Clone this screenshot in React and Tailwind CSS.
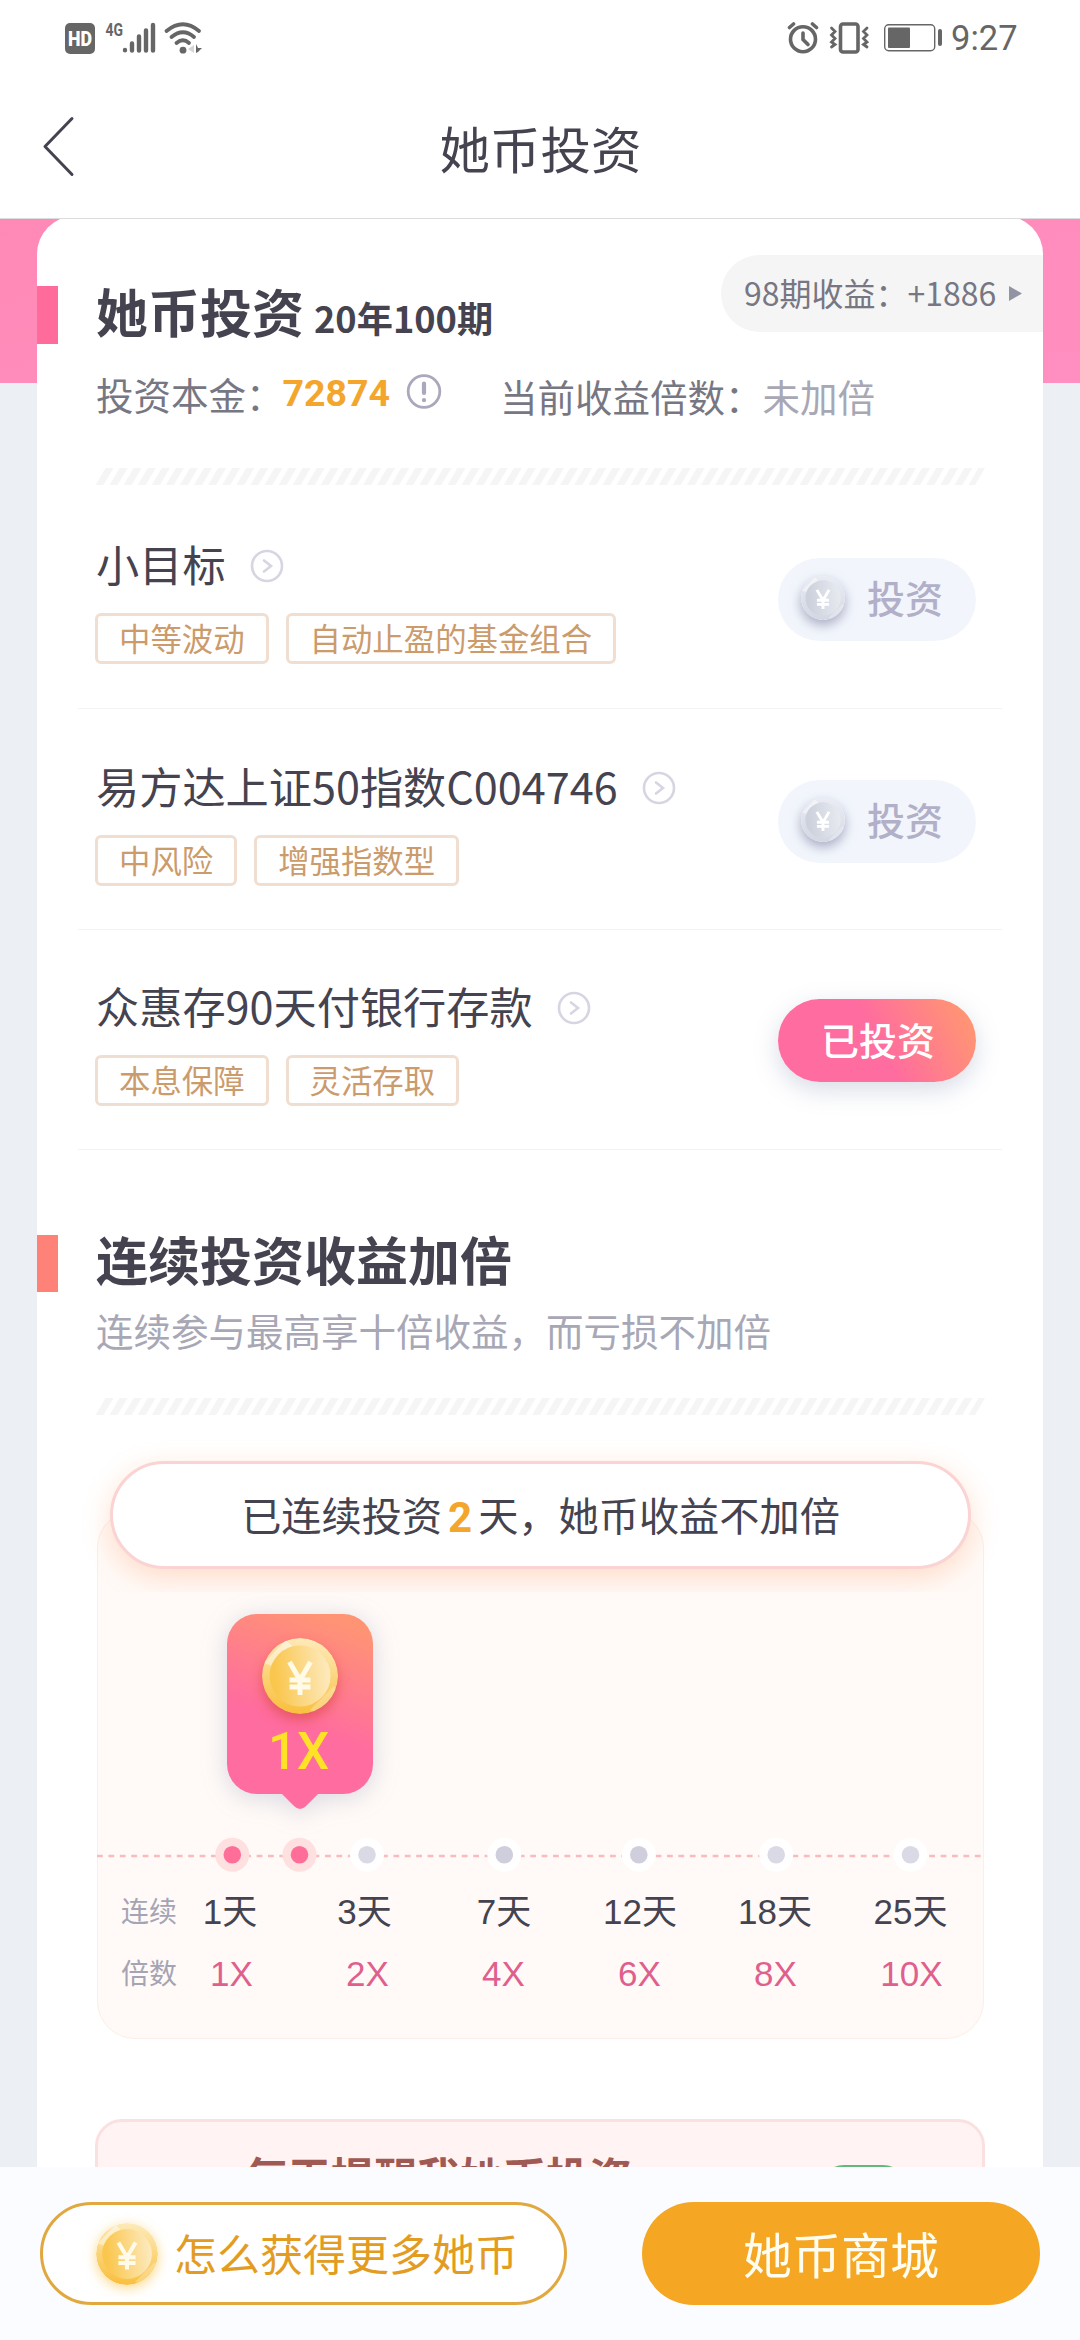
import React from "react";

const CJK = "font-['Noto_Sans_CJK_SC',sans-serif]";

function StatusBar() {
  return (
    <div className="flex h-[76px] shrink-0 items-start text-[#666] pt-[10px]">
      <svg className="ml-[65px]" width="140" height="48" viewBox="65 10 140 48" fill="#666">
        <rect x="65" y="23" width="30" height="31" rx="5" />
        <text x="80" y="45.500" textAnchor="middle" textLength="24" lengthAdjust="spacingAndGlyphs" fontFamily="Roboto, sans-serif" fontWeight="900" fontSize="20" fill="#fff">HD</text>
        <text x="105.500" y="36" textLength="17.500" lengthAdjust="spacingAndGlyphs" fontFamily="Roboto, sans-serif" fontWeight="700" fontSize="19">4G</text>
        <g stroke="#666" strokeWidth="4.400" strokeLinecap="round">
          <path d="M125 50v.3M132 43.500v7M139 36.500v14M146 30.500v20M153 25v25.500" />
        </g>
        <g fill="none" stroke="#666" strokeWidth="3.800" strokeLinecap="round">
          <path d="M166.500 31Q183 17.500 199 31" />
          <path d="M171.500 37Q183 27.500 194 37" />
          <path d="M176.500 43Q183 37.500 189 43" />
        </g>
        <circle cx="183" cy="50.200" r="3.400" />
        <path d="M194 45v8l-6-4z" fill="#d5d5d5" />
        <path d="M196 44l2 4h4l-4 4l-2 1z" />
      </svg>
      <svg className="ml-[581px] mt-[12px]" width="158" height="32" viewBox="785 22 158 32" fill="none" stroke="#666" strokeWidth="3.600" strokeLinecap="round">
        <circle cx="802" cy="39.200" r="12.500" />
        <path d="M802 33v6.500l5 5" />
        <path d="M788.500 27.500l4-3.500M815.500 27.500l-4-3.500" />
        <rect x="839.500" y="24" width="17.500" height="28" rx="2.500" />
        <path d="M830.500 28l3.500 3.500l-3.500 3.500l3.500 3.500l-3.500 3.500l3.500 2.500l-3.500 2.500M866 28l-3.500 3.500l3.500 3.500l-3.500 3.500l3.500 3.500l-3.500 2.500l3.500 2.500" strokeWidth="2.800" />
        <rect x="883.700" y="24.700" width="50" height="26" rx="4" strokeWidth="1.400" />
        <rect x="887" y="27.500" width="22" height="20.500" rx="1" fill="#666" stroke="none" />
        <rect x="937" y="29" width="4" height="17" rx="2" fill="#666" stroke="none" />
      </svg>
      <span className="ml-[7px] mt-[12px] font-['Roboto',sans-serif] text-[34.500px] leading-[32px]">9:27</span>
    </div>
  );
}

function Header() {
  return (
    <div className="grid h-[142px] shrink-0 grid-cols-[200px_1fr_200px] items-start">
      <svg className="ml-[42px] mt-[39px]" width="34" height="64" viewBox="0 0 34 64" fill="none" stroke="#45434f" strokeWidth="3" strokeLinecap="round" strokeLinejoin="round">
        <path d="M30 3.500L3 31.500L30 59.500" />
      </svg>
      <h1 className="mt-[41px] pl-px text-center text-[50.500px] leading-[60px] text-[#45434f]">她币投资</h1>
    </div>
  );
}

function Stripes({ id }) {
  return (
    <svg className="ml-[58px] block" width="890" height="17">
      <defs>
        <pattern id={id} width="14.080" height="17" patternUnits="userSpaceOnUse">
          <path d="M0.500 17L10.500 0H18.500L8.500 17zM-13.580 17L-3.580 0H4.420L-5.580 17z" fill="#f5f5f5" />
        </pattern>
      </defs>
      <path d="M0 17L10 0H890L880 17z" fill={`url(#${id})`} />
    </svg>
  );
}

function Coin({ size, silver, id, className }) {
  const c = silver
    ? { rimA: "#e9ecf3", rimB: "#d3d7e2", inA: "#ccd1dc", inB: "#e8eaf0", y: "#ffffff" }
    : { rimA: "#fdeab8", rimB: "#f9bf3c", inA: "#fac74e", inB: "#fdeac0", y: "#fffbe8" };
  return (
    <svg className={className} width={size} height={size} viewBox="0 0 76 76">
      <defs>
        <linearGradient id={id + "r"} x1="0.500" y1="0" x2="0.400" y2="1">
          <stop offset="0" stopColor={c.rimA} />
          <stop offset="1" stopColor={c.rimB} />
        </linearGradient>
        <linearGradient id={id + "i"} x1="0" y1="0.550" x2="1" y2="0.450">
          <stop offset="0.100" stopColor={c.inA} />
          <stop offset="1" stopColor={c.inB} />
        </linearGradient>
        <clipPath id={id + "c"}><circle cx="38" cy="38" r="38" /></clipPath>
      </defs>
      <circle cx="38" cy="38" r="38" fill={`url(#${id}r)`} />
      <g clipPath={`url(#${id}c)`} fill="#fff" opacity="0.450">
        <path d="M2 25L24 2L30 8L10 28z" />
        <path d="M48 72L72 48L76 54L56 76z" opacity="0.600" />
      </g>
      <circle cx="38" cy="38" r="30.500" fill={`url(#${id}i)`} />
      <path d="M27.500 24L38 42L48.500 24M38 41V57M27.500 42H48.500M27.500 49H48.500" fill="none" stroke={c.y} strokeWidth="5" />
    </svg>
  );
}

function ArrowCircle() {
  return (
    <svg className="ml-[24px] mt-[5px]" width="34" height="34" viewBox="0 0 34 34" fill="none" stroke="#d6d5e2" strokeWidth="2.600" strokeLinecap="round">
      <circle cx="17" cy="17" r="15" />
      <path d="M14 11.500l7 5.500l-7 5.500" />
    </svg>
  );
}

const products = [
  { name: "小目标", tags: ["中等波动", "自动止盈的基金组合"], size: "h-[224px] pb-[44px]" },
  { name: "易方达上证50指数C004746", tags: ["中风险", "增强指数型"], size: "h-[221px] pb-[43px]" },
  { name: "众惠存90天付银行存款", tags: ["本息保障", "灵活存取"], done: true, size: "h-[220px] pb-[43px]" },
];

function Product({ item, index }) {
  return (
    <div className={`mx-[41px] flex items-end justify-between border-b border-[#f3f3f5] pl-[18px] ${item.size}`}>
      <div>
        <div className="flex items-center text-[43.200px] leading-[60px] text-[#45434f]">
          <span>{item.name}</span>
          <ArrowCircle />
        </div>
        <div className="-ml-px mt-[20px] flex gap-[17px]">
          {item.tags.map((t) => (
            <span key={t} className="h-[51px] rounded-[6px] border-[3px] border-[#f0dfd1] px-[21px] text-[31.400px] leading-[43px] text-[#cb9b6c]">{t}</span>
          ))}
        </div>
      </div>
      {item.done ? (
        <div className="mb-[24px] mr-[26px] h-[83px] w-[198px] rounded-full bg-[linear-gradient(63deg,#ff6c9f_50%,#ff9474_92%)] pl-[2px] text-center text-[38px] font-medium leading-[79px] text-white shadow-[0_8px_24px_rgba(120,130,170,0.280)]">已投资</div>
      ) : (
        <div className="mb-[23px] mr-[26px] flex h-[83px] w-[198px] items-center rounded-full bg-[#f2f6fc] text-[38px] font-medium text-[#b1b0c8]">
          <Coin id={"s" + index} silver size={44} className="-mt-[4px] ml-[23px] rounded-full shadow-[0_5px_12px_rgba(130,130,165,0.650)]" />
          <span className="-mt-[5px] ml-[22px] leading-[80px]">投资</span>
        </div>
      )}
    </div>
  );
}

const steps = [
  { day: "1天", x: "1X", shift: "pr-[4px]" },
  { day: "3天", x: "2X", shift: "pr-[7px]" },
  { day: "7天", x: "4X", shift: "" },
  { day: "12天", x: "6X", shift: "" },
  { day: "18天", x: "8X", shift: "pr-[2px]" },
  { day: "25天", x: "10X", shift: "pr-[3px]" },
];

const dots = [
  [135.3, "#ffe0e0", "#ff6e99"],
  [202.5, "#ffe0e0", "#ff6e99"],
  [270, "#ffffff", "#dadae6"],
  [407.3, "#ffffff", "#cfcedc"],
  [541.8, "#ffffff", "#cfcedc"],
  [679.2, "#ffffff", "#dadae6"],
  [813.5, "#ffffff", "#dadae6"],
];

function Streak() {
  return (
    <div className="relative ml-[60px] mr-[59px] mt-[95px] h-[529px] rounded-[38px] border border-[#fdeee6] bg-[#fffaf7]">
      <div className="absolute -left-[41px] -right-[41px] -top-[81px] h-[162px] overflow-hidden px-[53px] pt-[31px]">
        <div className="flex h-[108px] justify-center rounded-full border-[3px] border-[#fad3d2] bg-white text-[40.200px] leading-[99px] text-[#45434f] shadow-[0_8px_28px_rgba(255,150,90,0.300)]">
          <span>已连续投资</span>
          <span className="w-[36px] pt-[4px] text-center font-['Roboto',sans-serif] text-[42px] font-bold text-[#f3a62b]">2</span>
          <span>天，她币收益不加倍</span>
        </div>
      </div>

      <div className="absolute left-[129px] top-[103px] flex w-[146px] flex-col items-center drop-shadow-[0_4px_12px_rgba(120,130,170,0.280)]">
        <div className="flex h-[180px] w-full flex-col items-center rounded-[30px] bg-[linear-gradient(200deg,#ff9474_8%,#ff6c9f_60%)] pt-[24px]">
          <Coin id="g1" size={76} className="rounded-full shadow-[0_6px_12px_rgba(215,70,60,0.600)]" />
          <span className="-ml-[3px] font-['Roboto',sans-serif] text-[51px] font-medium leading-[75px] text-[#ffe128]">1X</span>
        </div>
        <svg className="-mt-px" width="38" height="17" viewBox="0 0 38 17" fill="#ff6c9f">
          <path d="M0 0H38L25 13Q19 19 13 13z" />
        </svg>
      </div>

      <svg className="-mx-px mt-[326px] block" width="887" height="36" viewBox="0 0 887 36">
        <path d="M0 19H887" stroke="#f9bcbb" strokeWidth="2.600" strokeDasharray="5.800 5.600" />
        {dots.map(([x, outer, inner]) => (
          <g key={x}>
            <circle cx={x} cy="17.700" r="17" fill={outer} />
            <circle cx={x} cy="17.700" r="8.800" fill={inner} />
          </g>
        ))}
      </svg>

      <div className="-ml-px mt-[19px] grid grid-cols-[67px_repeat(6,136px)] text-center font-['Liberation_Sans','Noto_Sans_CJK_SC',sans-serif] text-[35px] leading-[40px] text-[#45434f]">
        <span className="whitespace-nowrap pl-[24px] text-left font-['Noto_Sans_CJK_SC',sans-serif] text-[28px] leading-[37px] text-[#a5a4b4]">连续</span>
        {steps.map((s) => (
          <span key={s.day} className={s.shift}>{s.day}</span>
        ))}
      </div>
      <div className="-ml-px mt-[22px] grid grid-cols-[67px_repeat(6,136px)] text-center font-['Liberation_Sans',sans-serif] text-[35px] leading-[40px] text-[#e0608d]">
        <span className="whitespace-nowrap pl-[24px] text-left font-['Noto_Sans_CJK_SC',sans-serif] text-[28px] leading-[37px] text-[#a5a4b4]">倍数</span>
        {steps.map((s) => (
          <span key={s.x} className="pr-px">{s.x}</span>
        ))}
      </div>
    </div>
  );
}

export default function App() {
  return (
    <div className={`flex h-[2340px] w-[1080px] flex-col overflow-hidden bg-white ${CJK}`}>
      <StatusBar />
      <Header />
      <div className="h-px shrink-0 bg-[#dcdcde]" />

      <div className="h-[1948px] shrink-0 overflow-hidden bg-[#ecf0f5] bg-[linear-gradient(170deg,#ff89b6,#ff8fc1)] bg-[length:100%_164px] bg-no-repeat">
        <div className="-mt-[3px] ml-[37px] mr-[37px] h-[2200px] overflow-hidden rounded-[38px] bg-white">
          <div className="flex h-[128px] items-end">
            <div className="h-[58px] w-[21px] bg-[#ff6c9c]" />
            <h2 className="-mb-[6px] ml-[38px] flex items-baseline whitespace-nowrap text-[52px] font-bold leading-[66px] text-[#45434f]">
              她币投资<span className="ml-[10px] text-[36.200px]">20年100期</span>
            </h2>
            <div className="mb-[12px] ml-auto flex h-[77px] w-[322px] items-center rounded-l-full bg-[#f5f5f5] pl-[23px] text-[32px] leading-[73px] text-[#777783]">
              <span className="-mt-[3px]">98期收益：+1886</span>
              <svg className="ml-[13px]" width="13" height="15" viewBox="0 0 13 15"><path d="M0 0L13 7.500L0 15z" fill="#9293a3" /></svg>
            </div>
          </div>
          <div className="flex h-[124px] items-start pl-[59px] text-[37.500px] leading-[40px] text-[#777783]">
            <span className="mt-[30px]">投资本金：</span>
            <span className="-ml-px mt-[29px] font-['Roboto',sans-serif] font-bold text-[#f3a62b]">72874</span>
            <svg className="ml-[16px] mt-[29px]" width="36" height="37" viewBox="0 0 36 37" fill="none" stroke="#a9a8bc" strokeLinecap="round">
              <circle cx="18" cy="18.500" r="15.800" strokeWidth="2.800" />
              <path d="M18 10.500v9.500M18 27v.2" strokeWidth="4.200" />
            </svg>
            <span className="ml-[58px] mt-[32px]">当前收益倍数：</span>
            <span className="mt-[32px] text-[#a8a7b5]">未加倍</span>
          </div>
          <Stripes id="st1" />
          {products.map((p, i) => (
            <Product key={p.name} item={p} index={i} />
          ))}

          <div className="mt-[85px] flex h-[57px] items-center">
            <div className="h-[57px] w-[21px] bg-[#ff8279]" />
            <h2 className="-mt-[9px] ml-[38px] text-[52px] font-bold leading-[60px] text-[#45434f]">连续投资收益加倍</h2>
          </div>
          <p className="mb-[48px] ml-[59px] mt-[18px] text-[37.500px] leading-[40px] text-[#a8a7b5]">连续参与最高享十倍收益，而亏损不加倍</p>
          <Stripes id="st2" />
          <Streak />

          <div className="mx-[58px] mt-[80px] flex h-[200px] rounded-[27px] border-[3px] border-[#fae1e0] bg-[#fff3f3]">
            <span className="ml-[147px] mt-[23px] text-[43px] font-bold leading-[60px] text-[#a05a54]">每天提醒我她币投资</span>
            <div className="ml-auto mr-[73px] mt-[43px] h-[52px] w-[91px] rounded-full bg-[#64b87a]" />
          </div>
        </div>
      </div>

      <div className="flex h-[173px] shrink-0 items-start justify-between bg-[#fafcff] pl-[40px] pr-[40px] pt-[35px]">
        <div className="flex h-[103px] w-[527px] items-center rounded-full border-[3px] border-[#e2a840] bg-white text-[43px] leading-[94px] text-[#e39c22]">
          <Coin id="g2" size={62} className="ml-[53px] rounded-full shadow-[0_3px_12px_rgba(250,190,60,0.600)]" />
          <span className="-mt-[4px] ml-[16px]">怎么获得更多她币</span>
        </div>
        <div className="h-[103px] w-[398px] rounded-full bg-[#f5a623] text-center text-[49px] leading-[101px] text-[#fffdf0]">她币商城</div>
      </div>
    </div>
  );
}
